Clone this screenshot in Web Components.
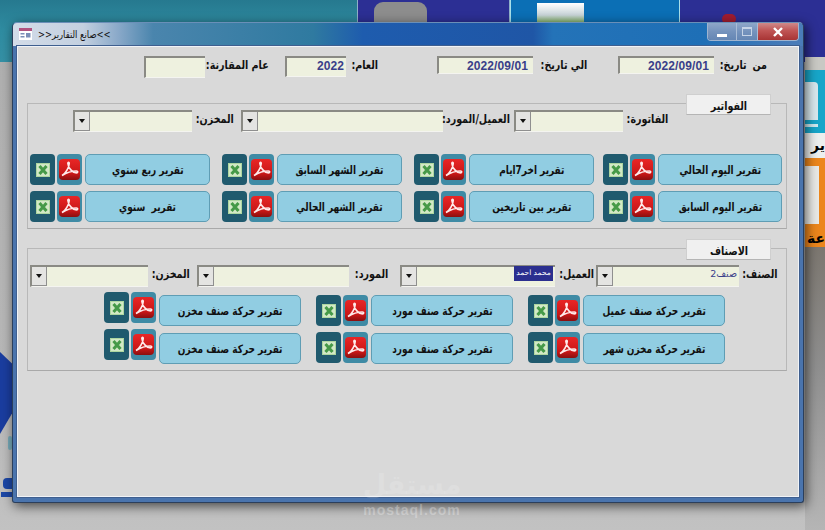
<!DOCTYPE html>
<html lang="ar">
<head>
<meta charset="utf-8">
<title>صانع التقارير</title>
<style>
  html, body { margin: 0; height: 530px; overflow: hidden; background: #b9b9b9; }
</style>
</head>
<body>
<report-desktop>
  <app-window caption=">>صانع التقارير<<">

    <top-row>
      <value-field style="--box:61px;--h:22px;--lab:61px;--gap:3px;margin-left:126px" label="عام المقارنة:"></value-field>
      <value-field style="--box:61px;--h:21px;--lab:26px;--gap:6px;--pr:2px;margin-left:16px" label="العام:">2022</value-field>
      <value-field style="--box:96px;--h:18px;--lab:49px;--gap:5px;margin-left:59px" label="الي تاريخ:">2022/09/01</value-field>
      <value-field style="--box:96px;--h:18px;--lab:49px;--gap:4px;--ws:3px;margin-left:31px" label="من تاريخ:">2022/09/01</value-field>
    </top-row>

    <group-box caption="الفواتير" style="--top:9px;--inner:124px;--pad-top:6px">
      <filter-row>
        <combo-field style="--box:119px;--gap:3px;--lab:39px;margin-left:45px" label="المخزن:"></combo-field>
        <combo-field style="--box:202px;--gap:1px;--lab:66px;margin-left:7px" label="العميل/المورد:"></combo-field>
        <combo-field style="--box:109px;--gap:6px;--lab:39px;margin-left:4px" label="الفاتورة:"></combo-field>
      </filter-row>
      <button-grid style="--cols:192px 192px 189px 179px;--left:2px;--first:22px;--row-gap:6px">
        <report-button>تقرير ربع سنوي</report-button>
        <report-button>تقرير الشهر السابق</report-button>
        <report-button>تقرير اخر7ايام</report-button>
        <report-button>تقرير اليوم الحالي</report-button>
        <report-button>تقرير  سنوي</report-button>
        <report-button>تقرير الشهر الحالي</report-button>
        <report-button>تقرير بين تاريخين</report-button>
        <report-button>تقرير اليوم السابق</report-button>
      </button-grid>
    </group-box>

    <group-box caption="الاصناف" style="--top:19px;--inner:121px;--pad-top:16px">
      <filter-row>
        <combo-field style="--box:118px;--gap:2px;--lab:40px;margin-left:2px" label="المخزن:"></combo-field>
        <combo-field style="--box:152px;--gap:3px;--lab:36px;margin-left:7px" label="المورد:"></combo-field>
        <combo-field style="--box:155px;--gap:5px;--lab:34px;margin-left:12px" label="العميل:"><mark class="hl">محمد احمد</mark></combo-field>
        <combo-field style="--box:143px;--gap:4px;--lab:35px;margin-left:2px" label="الصنف:"><span class="val">صنف2</span></combo-field>
      </filter-row>
      <button-grid style="--cols:212px 212px 197px;--left:76px;--first:8px;--row-gap:7px">
        <report-button style="--main:142px;--lift:-3px">تقرير حركة صنف مخزن</report-button>
        <report-button style="--main:142px">تقرير حركة صنف مورد</report-button>
        <report-button style="--main:143px">تقرير حركة صنف عميل</report-button>
        <report-button style="--main:142px;--lift:-4px">تقرير حركة صنف مخزن</report-button>
        <report-button style="--main:142px;--lift:-1px">تقرير حركة صنف مورد</report-button>
        <report-button style="--main:143px;--lift:-1px">تقرير حركة مخزن شهر</report-button>
      </button-grid>
    </group-box>

  </app-window>
</report-desktop>

<script>
const ARABIC = '"DejaVu Sans", "Noto Sans", sans-serif';

class ReportDesktop extends HTMLElement {
  connectedCallback() {
    this.attachShadow({ mode: "open" }).innerHTML = `
    <style>
      :host { display: block; position: relative; width: 825px; height: 530px; overflow: hidden;
        background: linear-gradient(#aeaeae 0, #b8b8b8 400px, #c2c2c2 530px); font-family: ${ARABIC}; }
      .band { position: absolute; left: 0; top: 0; width: 357px; height: 62px; background: linear-gradient(#26798f, #2f8ca1 30px, #3590a5); }
      .tile { position: absolute; top: 0; height: 62px; box-sizing: border-box; }
      .t1 { left: 357px; width: 153px; background: #2c2f94; border: 1px solid #8fb0c8; border-top: 0; }
      .t2 { left: 510px; width: 170px; background: #0b6fb5; border: 1px solid #a8e0ea; border-top: 0; }
      .t3 { left: 680px; width: 145px; background: #2c2f94; }
      .grey { position: absolute; left: 374px; top: 2px; width: 53px; height: 30px; border-radius: 9px; background: #8d8d8d; }
      .thumb { position: absolute; left: 537px; top: 3px; width: 47px; height: 30px; background: linear-gradient(#fff 0, #c8d4d8 12px, #7fb060 20px, #e4e4e4 24px); }
      .red { position: absolute; left: 722px; top: 14px; width: 14px; height: 10px; border-radius: 5px; background: #a01c30; }
      .side { position: absolute; left: 805px; width: 20px; }
      .s-grey { top: 57px; height: 13px; background: #c9c9c4; }
      .s-cyan { top: 70px; height: 63px; background: #17a6c9; }
      .s-page { position: absolute; left: 0; top: 12px; width: 13px; height: 38px; background: #d8e8ee; border-radius: 0 4px 0 0; box-shadow: 0 4px 0 #17a6c9, 0 7px 0 #cfeaf0; }
      .s-white { top: 133px; height: 25px; background: #ecefee; color: #000; font-size: 14px; font-weight: bold; line-height: 25px; text-align: right; white-space: nowrap; direction: rtl; }
      .s-orange { top: 158px; height: 89px; background: #ec861c; color: #000; }
      .s-doc { position: absolute; left: 0; top: 8px; width: 14px; height: 58px; background: #e9e9e6; }
      .s-word { position: absolute; right: 0; bottom: -1px; font-size: 14px; font-weight: bold; direction: rtl; white-space: nowrap; line-height: 20px; }
      .s-rest { top: 247px; height: 283px; background: linear-gradient(#7c7770, #8f8f8f 120px, #b5b5b5); }
      .hex { position: absolute; left: 0; top: 352px; width: 12px; height: 82px; background: #1a3d9f; clip-path: polygon(0 0, 100% 14%, 100% 75%, 0 100%); }
      .tint { position: absolute; left: 8px; top: 436px; width: 4px; height: 14px; background: #4aa0b8; border-radius: 2px; opacity: .6; }
      .bit { position: absolute; left: 3px; top: 478px; width: 9px; height: 11px; border-radius: 4px 0 0 4px; background: #1c47a6; }
      .bit2 { position: absolute; left: 1px; top: 492px; width: 11px; height: 5px; background: #1c47a6; }
      .mark { position: absolute; left: 362px; top: 467px; width: 100px; text-align: center; color: rgba(255,255,255,.17); pointer-events: none; }
      .mark b { display: block; font-size: 27px; line-height: 36px; }
      .mark i { display: block; font: bold 14px/14px "Liberation Sans", sans-serif; letter-spacing: 1px; color: rgba(255,255,255,.28); }
    </style>
    <div class="band"></div>
    <div class="tile t1"></div><div class="grey"></div>
    <div class="tile t2"></div><div class="thumb"></div>
    <div class="tile t3"></div><div class="red"></div>
    <div class="side s-grey"></div>
    <div class="side s-cyan"><div class="s-page"></div></div>
    <div class="side s-white">ير</div>
    <div class="side s-orange"><div class="s-doc"></div><div class="s-word">عة</div></div>
    <div class="side s-rest"></div>
    <div class="hex"></div><div class="tint"></div><div class="bit"></div><div class="bit2"></div>
    <slot></slot>
    <div class="mark"><b>مستقل</b><i>mostaql.com</i></div>
    `;
  }
}

class AppWindow extends HTMLElement {
  connectedCallback() {
    const caption = this.getAttribute("caption").replace(/</g, "&lt;").replace(/>/g, "&gt;");
    this.attachShadow({ mode: "open" }).innerHTML = `
    <style>
      :host { display: flex; flex-direction: column; position: absolute; left: 12px; top: 22px; width: 792px; height: 481px;
        box-sizing: border-box; background: #4a74ad; border: 1px solid #2b3f5c; border-top-color: #6a8fb8; border-radius: 5px 5px 3px 3px;
        box-shadow: 2px 3px 12px rgba(0,0,0,.65); }
      .bar { display: flex; align-items: flex-start; height: 23px; flex: none; border-radius: 4px 4px 0 0;
        background: linear-gradient(90deg, #d3dce8 0, #c3d0e0 70px, #8aa9c9 105px, #4a85ad 140px, #2f7aa0 300px, #1e5cae 350px, #1f56a6 520px, #2473b8 540px, #1e6fb6 690px, #4a7cb8 780px); }
      .icon { display: block; margin: 5px 0 0 6px; flex: none; }
      .title { margin: 5px 0 0 6px; font-size: 10px; line-height: 13px; color: #111; direction: rtl; unicode-bidi: plaintext; white-space: nowrap;
        transform: scaleX(.84); transform-origin: left center; }
      .controls { display: flex; height: 18px; margin-left: auto; margin-right: 4px; border: 1px solid #9fb4cf; border-top: 0; border-radius: 0 0 4px 4px; box-sizing: border-box; overflow: hidden; }
      .controls span { display: flex; align-items: center; justify-content: center; box-sizing: border-box; background: linear-gradient(#8ea7c9, #7593bd 50%, #6586b4); border-right: 1px solid #a9bcd6; }
      .min { width: 29px; } .max { width: 21px; }
      .controls .close { width: 40px; border: 0; background: linear-gradient(#cf8a8a, #c05555 45%, #a83434); }
      .min::after { content: ""; width: 10px; height: 3px; margin-top: 7px; background: #fff; }
      .max::after { content: ""; width: 8px; height: 6px; border: 1px solid #c5d3e6; border-top-width: 2px; }
      .client { flex: 1; margin: 0 4px 5px; background: #d9d9d9; border: 1px solid #f0f3f7; outline: 1px solid #3f5f8f; }
    </style>
    <div class="bar">
      <svg class="icon" width="13" height="12" viewBox="0 0 13 12">
        <rect width="13" height="12" fill="#fff"/>
        <rect width="13" height="3" fill="#b0527f"/>
        <path d="M1.5 5H5.5V6.5H1.5ZM1.5 8H5.5V9.5H1.5ZM7 5H11.5V9.5H7Z" fill="#7c8fb8"/>
      </svg>
      <div class="title">${caption}</div>
      <div class="controls">
        <span class="min"></span><span class="max"></span>
        <span class="close"><svg width="12" height="10" viewBox="0 0 12 10"><path d="M2 1L10 9M10 1L2 9" stroke="#fff" stroke-width="2.4" fill="none"/></svg></span>
      </div>
    </div>
    <div class="client"><slot></slot></div>
    `;
  }
}

class TopRow extends HTMLElement {
  connectedCallback() {
    this.attachShadow({ mode: "open" }).innerHTML = `
    <style>:host { display: flex; align-items: flex-start; padding-top: 9px; height: 38px; }</style>
    <slot></slot>`;
  }
}

// the reference font is narrower than DejaVu, so labels are squeezed a little
const LABEL = `display: inline-block; font-size: 11.5px; line-height: 18px; font-weight: bold; color: #111; direction: rtl; white-space: nowrap; transform: scaleX(.83);`;

class ValueField extends HTMLElement {
  connectedCallback() {
    this.attachShadow({ mode: "open" }).innerHTML = `
    <style>
      :host { display: flex; align-items: flex-start; }
      .box { box-sizing: border-box; width: var(--box); height: var(--h); padding-right: var(--pr, 5px); background: #eef1df;
        border-top: 2px solid #8a8a84; border-left: 2px solid #8a8a84; border-bottom: 1px solid #f4f4f0;
        font: bold 12px/16px "Liberation Sans", sans-serif; color: #3a3f8a; text-align: right; letter-spacing: .1px; }
      .lab { display: flex; justify-content: flex-end; width: var(--lab); margin-left: var(--gap); }
      .lab span { flex: none; word-spacing: var(--ws, 0); transform-origin: right center; ${LABEL} }
    </style>
    <div class="box"><slot></slot></div>
    <div class="lab"><span>${this.getAttribute("label")}</span></div>`;
  }
}

class GroupBox extends HTMLElement {
  connectedCallback() {
    this.attachShadow({ mode: "open" }).innerHTML = `
    <style>
      :host { display: block; position: relative; box-sizing: content-box; width: 758px; height: var(--inner); margin: var(--top) 0 0 9px;
        border: 1px solid #b8b8b8; border-bottom-color: #a9a9a9; }
      .inner { padding-top: var(--pad-top); }
      .legend { position: absolute; right: 15px; top: -10px; width: 85px; height: 21px; box-sizing: border-box; background: #f0f0f0;
        border: 1px solid #cfcfcf; border-bottom-color: #b5b5b5; text-align: center; }
      .legend span { ${LABEL} }
    </style>
    <div class="legend"><span>${this.getAttribute("caption")}</span></div>
    <div class="inner"><slot></slot></div>`;
  }
}

class FilterRow extends HTMLElement {
  connectedCallback() {
    this.attachShadow({ mode: "open" }).innerHTML = `
    <style>:host { display: flex; height: 22px; }</style>
    <slot></slot>`;
  }
}

class ComboField extends HTMLElement {
  connectedCallback() {
    this.attachShadow({ mode: "open" }).innerHTML = `
    <style>
      :host { display: flex; align-items: flex-start; }
      .box { display: flex; box-sizing: border-box; width: var(--box); height: 22px; background: #eef1df;
        border-top: 2px solid #8a8a84; border-left: 2px solid #8a8a84; border-bottom: 1px solid #f4f4f0; }
      .drop { display: flex; align-items: center; justify-content: center; flex: none; width: 15px; box-sizing: border-box;
        background: #e4e4e2; border-right: 1px solid #8f8f8f; border-bottom: 1px solid #8f8f8f; }
      .drop::after { content: ""; border: 3px solid transparent; border-top: 4px solid #111; border-bottom: 0; }
      .text { flex: 1; display: flex; justify-content: flex-end; align-items: flex-start; padding-right: 2px; }
      ::slotted(.hl) { display: block; width: 39px; height: 15px; margin-top: -1px; background: #2b2f8f; color: #fff; font-size: 7.5px; line-height: 14px; text-align: center; white-space: nowrap; direction: rtl; }
      ::slotted(.val) { color: #3a3f8a; font-size: 9.5px; line-height: 14px; direction: rtl; }
      .lab { display: flex; justify-content: flex-end; width: var(--lab); margin-left: var(--gap); }
      .lab span { flex: none; transform-origin: right center; ${LABEL} }
    </style>
    <div class="box"><div class="drop"></div><div class="text"><slot></slot></div></div>
    <div class="lab"><span>${this.getAttribute("label")}</span></div>`;
  }
}

class ButtonGrid extends HTMLElement {
  connectedCallback() {
    this.attachShadow({ mode: "open" }).innerHTML = `
    <style>
      :host { display: grid; grid-template-columns: var(--cols); row-gap: var(--row-gap); margin: var(--first) 0 0 var(--left); }
    </style>
    <slot></slot>`;
  }
}

class ReportButton extends HTMLElement {
  connectedCallback() {
    this.attachShadow({ mode: "open" }).innerHTML = `
    <style>
      :host { display: flex; align-items: flex-start; gap: 2px; height: 31px; }
      .tile { display: flex; align-items: center; justify-content: center; width: 25px; height: 31px; flex: none; border-radius: 4px; margin-top: var(--lift, 0); }
      .xls { background: #205a6e; }
      .pdf { background: #3f8ba5; }
      .main { display: flex; align-items: center; justify-content: center; box-sizing: border-box; width: var(--main, 125px); height: 31px; margin-left: 1px;
        background: #91cde2; border: 1px solid #5f9db4; border-radius: 5px; overflow: hidden; }
      .main span { flex: none; font-size: 11.5px; font-weight: bold; color: #111; direction: rtl; white-space: pre; transform: scaleX(.78); }
    </style>
    <div class="tile xls">
      <svg width="14" height="14" viewBox="0 0 14 14">
        <rect width="14" height="14" fill="#d3e9c6"/>
        <rect x=".5" y=".5" width="13" height="13" fill="none" stroke="#aed6a0"/>
        <path d="M3.5 3L10.5 11M10.5 3L3.5 11" stroke="#469a48" stroke-width="3" fill="none"/>
      </svg>
    </div>
    <div class="tile pdf">
      <svg width="21" height="21" viewBox="0 0 21 21">
        <defs><linearGradient id="red" x1="0" y1="0" x2="0" y2="1"><stop offset="0" stop-color="#e92626"/><stop offset=".7" stop-color="#c81717"/><stop offset="1" stop-color="#8a0f0f"/></linearGradient></defs>
        <rect width="21" height="21" rx="4" fill="url(#red)"/>
        <path d="M3 16.5C6.5 15 10 8.5 10.2 4.5C10.3 3 8.8 3 8.9 4.5C9.2 9 13.5 13.8 17.5 13.8C19 13.8 19 12 17.5 12C13 12 7 14 3 16.5Z" fill="none" stroke="#ffeaea" stroke-width="1.7"/>
      </svg>
    </div>
    <div class="main"><span><slot></slot></span></div>`;
  }
}

customElements.define("report-desktop", ReportDesktop);
customElements.define("app-window", AppWindow);
customElements.define("top-row", TopRow);
customElements.define("value-field", ValueField);
customElements.define("group-box", GroupBox);
customElements.define("filter-row", FilterRow);
customElements.define("combo-field", ComboField);
customElements.define("button-grid", ButtonGrid);
customElements.define("report-button", ReportButton);
</script>
</body>
</html>
